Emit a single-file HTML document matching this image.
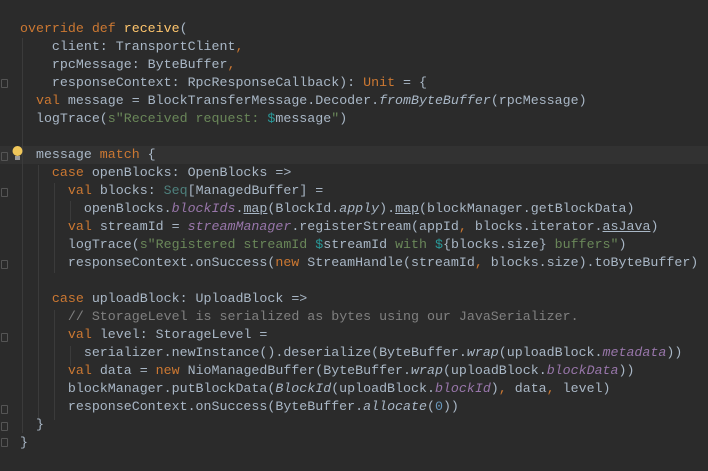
<!DOCTYPE html>
<html><head><meta charset="utf-8"><style>
html,body{margin:0;padding:0;background:#2b2b2b;width:708px;height:471px;overflow:hidden}
pre{position:absolute;left:20px;top:20px;margin:0;font-family:"Liberation Mono",monospace;font-size:13.3px;line-height:18px;color:#a9b7c6;white-space:pre}
.k{color:#cc7832}.s{color:#6a8759}.d{color:#299999}.i{font-style:italic}.p{color:#9876aa;font-style:italic}.c{color:#808080}.n{color:#6897bb}.t{color:#4e807d}.u{text-decoration:underline}
.hl{position:absolute;left:0;top:146px;width:708px;height:18px;background:#323232}
.g{position:absolute;width:1px;background:#3b3b3b}
.f{position:absolute;left:1px;width:5px;height:7px;border:1px solid #555;border-radius:1px}
</style></head><body>
<div class="hl"></div>
<div class="g" style="left:22px;top:38px;height:395px"></div>
<div class="g" style="left:38px;top:165px;height:255px"></div>
<div class="g" style="left:54px;top:183px;height:90px"></div>
<div class="g" style="left:54px;top:310px;height:110px"></div>
<div class="g" style="left:70px;top:201px;height:20px"></div>
<div class="g" style="left:70px;top:346px;height:20px"></div>
<div class="f" style="top:79px"></div>
<div class="f" style="top:152px"></div>
<div class="f" style="top:188px"></div>
<div class="f" style="top:260px"></div>
<div class="f" style="top:333px"></div>
<div class="f" style="top:405px"></div>
<div class="f" style="top:422px"></div>
<div class="f" style="top:438px"></div>
<svg style="position:absolute;left:11px;top:145px" width="13" height="17" viewBox="0 0 13 17"><circle cx="6.5" cy="6" r="5" fill="#f0c75a"/><rect x="4" y="11" width="5" height="4" fill="#9a9a9a"/></svg>
<pre><span class="k">override def </span><span style="color:#ffc66d">receive</span>(
    client: TransportClient<span class="k">,</span>
    rpcMessage: ByteBuffer<span class="k">,</span>
    responseContext: RpcResponseCallback): <span class="k">Unit</span> = {
  <span class="k">val </span>message = BlockTransferMessage.Decoder.<span class="i">fromByteBuffer</span>(rpcMessage)
  logTrace(<span class="s">s"Received request: </span><span class="d">$</span>message<span class="s">"</span>)

  message <span class="k">match</span> {
    <span class="k">case </span>openBlocks: OpenBlocks =&gt;
      <span class="k">val </span>blocks: <span class="t">Seq</span>[ManagedBuffer] =
        openBlocks.<span class="p">blockIds</span>.<span class="u">map</span>(BlockId.<span class="i">apply</span>).<span class="u">map</span>(blockManager.getBlockData)
      <span class="k">val </span>streamId = <span class="p">streamManager</span>.registerStream(appId<span class="k">,</span> blocks.iterator.<span class="u">asJava</span>)
      logTrace(<span class="s">s"Registered streamId </span><span class="d">$</span>streamId<span class="s"> with </span><span class="d">$</span>{blocks.size}<span class="s"> buffers"</span>)
      responseContext.onSuccess(<span class="k">new </span>StreamHandle(streamId<span class="k">,</span> blocks.size).toByteBuffer)

    <span class="k">case </span>uploadBlock: UploadBlock =&gt;
      <span class="c">// StorageLevel is serialized as bytes using our JavaSerializer.</span>
      <span class="k">val </span>level: StorageLevel =
        serializer.newInstance().deserialize(ByteBuffer.<span class="i">wrap</span>(uploadBlock.<span class="p">metadata</span>))
      <span class="k">val </span>data = <span class="k">new </span>NioManagedBuffer(ByteBuffer.<span class="i">wrap</span>(uploadBlock.<span class="p">blockData</span>))
      blockManager.putBlockData(<span class="i">BlockId</span>(uploadBlock.<span class="p">blockId</span>)<span class="k">,</span> data<span class="k">,</span> level)
      responseContext.onSuccess(ByteBuffer.<span class="i">allocate</span>(<span class="n">0</span>))
  }
}</pre>
</body></html>
